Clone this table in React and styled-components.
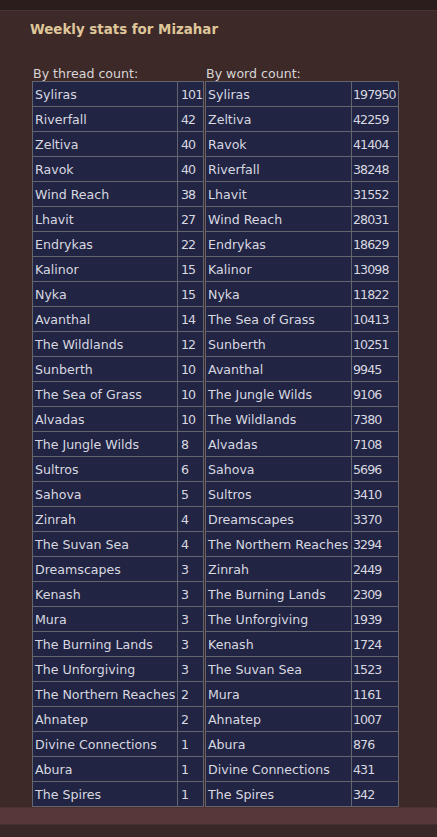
import React from 'react'
import styled, { createGlobalStyle } from 'styled-components'

const GlobalStyle = createGlobalStyle`
  html, body {
    margin: 0;
    padding: 0;
    background: #3b2727;
  }
`

const byThread = [
  ['Syliras', 101], ['Riverfall', 42], ['Zeltiva', 40], ['Ravok', 40],
  ['Wind Reach', 38], ['Lhavit', 27], ['Endrykas', 22], ['Kalinor', 15],
  ['Nyka', 15], ['Avanthal', 14], ['The Wildlands', 12], ['Sunberth', 10],
  ['The Sea of Grass', 10], ['Alvadas', 10], ['The Jungle Wilds', 8],
  ['Sultros', 6], ['Sahova', 5], ['Zinrah', 4], ['The Suvan Sea', 4],
  ['Dreamscapes', 3], ['Kenash', 3], ['Mura', 3], ['The Burning Lands', 3],
  ['The Unforgiving', 3], ['The Northern Reaches', 2], ['Ahnatep', 2],
  ['Divine Connections', 1], ['Abura', 1], ['The Spires', 1],
]

const byWord = [
  ['Syliras', 197950], ['Zeltiva', 42259], ['Ravok', 41404], ['Riverfall', 38248],
  ['Lhavit', 31552], ['Wind Reach', 28031], ['Endrykas', 18629], ['Kalinor', 13098],
  ['Nyka', 11822], ['The Sea of Grass', 10413], ['Sunberth', 10251], ['Avanthal', 9945],
  ['The Jungle Wilds', 9106], ['The Wildlands', 7380], ['Alvadas', 7108],
  ['Sahova', 5696], ['Sultros', 3410], ['Dreamscapes', 3370],
  ['The Northern Reaches', 3294], ['Zinrah', 2449], ['The Burning Lands', 2309],
  ['The Unforgiving', 1939], ['Kenash', 1724], ['The Suvan Sea', 1523],
  ['Mura', 1161], ['Ahnatep', 1007], ['Abura', 876],
  ['Divine Connections', 431], ['The Spires', 342],
]

const Styled = {
  Page: styled.div`
    display: flex;
    flex-direction: column;
    width: 437px;
    min-height: 837px;
    font-family: "DejaVu Sans", Verdana, sans-serif;
  `,
  TopBar: styled.div`
    height: 10px;
    background: #2c1d1d;
    border-bottom: 1px solid #4a3232;
  `,
  Content: styled.div`
    display: flex;
    flex-direction: column;
    padding: 0 0 0 30px;
    background: #3e2929;
  `,
  Title: styled.h2`
    margin: 4px 0 0 0;
    height: 30px;
    font-size: 13.4px;
    font-weight: bold;
    color: #dfc79a;
    line-height: 30px;
  `,
  Columns: styled.div`
    display: flex;
    gap: 1px;
    padding: 21px 0 0 2px;
  `,
  Column: styled.div`
    display: flex;
    flex-direction: column;
  `,
  Caption: styled.div`
    height: 15px;
    font-size: 12.6px;
    color: #d6d6d6;
    line-height: 15px;
    padding-left: 1px;
  `,
  Table: styled.table`
    width: ${props => props.w}px;
    border-collapse: separate;
    border-spacing: 0;
    table-layout: fixed;
    border-top: 1px solid #64646c;
    border-left: 1px solid #64646c;
    background: #212442;
  `,
  Cell: styled.td`
    box-sizing: border-box;
    width: ${props => props.w}px;
    height: 25px;
    padding: 0 0 0 ${props => props.pad}px;
    border-right: 1px solid #64646c;
    border-bottom: 1px solid #64646c;
    font-size: 12.6px;
    color: #d8d8e0;
    white-space: nowrap;
    overflow: hidden;
    vertical-align: middle;
  `,
  Num: styled.span`
    letter-spacing: -0.9px;
  `,
  BottomBar: styled.div`
    height: 16px;
    background: #573737;
    border-top: 1px solid #4d3131;
  `,
  Footer: styled.div`
    flex: 1;
    background: #3a2727;
    border-top: 1px solid #452e2e;
  `,
}

const StatTable = ({ caption, rows, nameW, numW, numPad }) => (
  <Styled.Column>
    <Styled.Caption>{caption}</Styled.Caption>
    <Styled.Table w={1 + nameW + numW}>
      <tbody>
        {rows.map(([name, n]) => (
          <tr key={name}>
            <Styled.Cell w={nameW} pad={2}>{name}</Styled.Cell>
            <Styled.Cell w={numW} pad={numPad}><Styled.Num>{n}</Styled.Num></Styled.Cell>
          </tr>
        ))}
      </tbody>
    </Styled.Table>
  </Styled.Column>
)

const App = () => (
  <>
    <GlobalStyle />
    <Styled.Page>
      <Styled.TopBar />
      <Styled.Content>
        <Styled.Title>Weekly stats for Mizahar</Styled.Title>
        <Styled.Columns>
          <StatTable caption="By thread count:" rows={byThread} nameW={145} numW={26} numPad={3} />
          <StatTable caption="By word count:" rows={byWord} nameW={146} numW={47} numPad={1} />
        </Styled.Columns>
      </Styled.Content>
      <Styled.BottomBar />
      <Styled.Footer />
    </Styled.Page>
  </>
)

export default App
